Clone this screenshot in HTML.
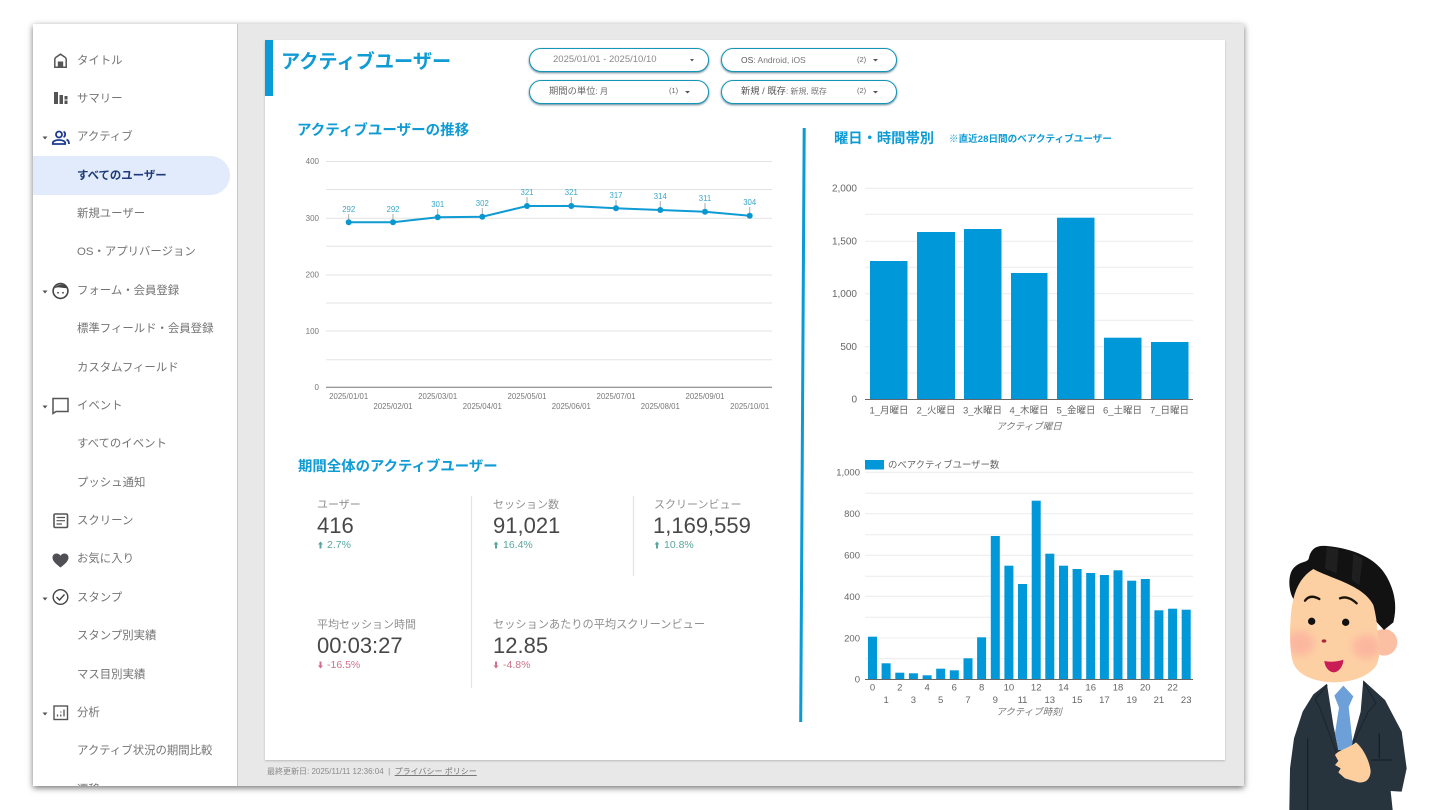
<!DOCTYPE html>
<html lang="ja">
<head>
<meta charset="utf-8">
<title>アクティブユーザー</title>
<style>
html,body{margin:0;padding:0;background:#fff;width:1440px;height:810px;overflow:hidden}
body{font-family:"Liberation Sans","Noto Sans CJK JP",sans-serif;position:relative}
#root{position:absolute;left:0;top:0;width:1440px;height:810px;filter:blur(.3px)}
.a{position:absolute}
.t{position:absolute;white-space:nowrap;line-height:16px;height:16px}
.n{font-size:11.4px;color:#747474;left:77px}
.h{color:#0f9bd3;font-weight:700}
.pill{position:absolute;box-sizing:border-box;height:24px;border:1px solid #1596b8;border-radius:12px;background:#fff;box-shadow:0 1px 2px rgba(0,60,90,.65)}
.k{font-size:11px;color:#8f8f8f}
.v{font-size:22px;color:#484848;line-height:26px;height:26px}
.d{font-size:10.5px}
.up{color:#5aa6a0}
.dn{color:#d0708a}
svg text{font-family:"Liberation Sans","Noto Sans CJK JP",sans-serif;dominant-baseline:central}
</style>
</head>
<body>
<div id="root">
<div class="a" style="left:33px;top:24px;width:1211px;height:762px;background:#e8e8e8;box-shadow:0 2px 6px rgba(0,0,0,.55)"></div>
<div class="a" style="left:0;top:0;width:1440px;height:786px;overflow:hidden">
  <div class="a" style="left:33px;top:24px;width:204px;height:762px;background:#fff;border-right:1px solid #c8c8c8"></div>
  <div class="a" style="left:33px;top:156px;width:197px;height:39px;background:#e2ebfb;border-radius:0 20px 20px 0"></div>

  <div class="t n" style="top:53px">タイトル</div>
  <div class="t n" style="top:91px">サマリー</div>
  <div class="t n" style="top:129px">アクティブ</div>
  <div class="t n" style="top:168px;color:#1f3a7a;font-weight:700">すべてのユーザー</div>
  <div class="t n" style="top:206px">新規ユーザー</div>
  <div class="t n" style="top:244px">OS・アプリバージョン</div>
  <div class="t n" style="top:283px">フォーム・会員登録</div>
  <div class="t n" style="top:321px">標準フィールド・会員登録</div>
  <div class="t n" style="top:360px">カスタムフィールド</div>
  <div class="t n" style="top:398px">イベント</div>
  <div class="t n" style="top:436px">すべてのイベント</div>
  <div class="t n" style="top:475px">プッシュ通知</div>
  <div class="t n" style="top:513px">スクリーン</div>
  <div class="t n" style="top:551px">お気に入り</div>
  <div class="t n" style="top:590px">スタンプ</div>
  <div class="t n" style="top:628px">スタンプ別実績</div>
  <div class="t n" style="top:667px">マス目別実績</div>
  <div class="t n" style="top:705px">分析</div>
  <div class="t n" style="top:743px">アクティブ状況の期間比較</div>
  <div class="t n" style="top:782px">遷移</div>
</div>

<svg class="a" style="left:0;top:0" width="240" height="786" viewBox="0 0 240 786">
  <g fill="#555">
    <path d="M42.500 136.500h5l-2.500 3z"/><path d="M42.500 290.500h5l-2.500 3z"/><path d="M42.500 405.500h5l-2.500 3z"/><path d="M42.500 597.500h5l-2.500 3z"/><path d="M42.500 712.500h5l-2.500 3z"/>
  </g>
  <!-- home -->
  <path d="M54.800 67.200V59.500c0-1 .4-1.700 1.200-2.300l4.500-3 4.500 3c.8.600 1.200 1.300 1.200 2.300v7.700z" fill="none" stroke="#555" stroke-width="1.500"/>
  <rect x="57.800" y="61.500" width="5.400" height="6" fill="#555"/>
  <!-- summary -->
  <g fill="#555"><rect x="54" y="92" width="4" height="12"/><rect x="59.500" y="95" width="3.500" height="9"/><rect x="64.500" y="96" width="3" height="3.500"/><rect x="64.500" y="100.500" width="3" height="3.500"/></g>
  <!-- people -->
  <g fill="none" stroke="#1d3c8f" stroke-width="1.800">
    <circle cx="59" cy="134.500" r="3"/>
    <path d="M52.800 144v-1c0-1.800 2.800-3 6.200-3s6.200 1.200 6.200 3v1z"/>
    <path d="M63.500 131.800c2 .4 2.400 4.400 0 5.200"/>
    <path d="M66.500 139.500c1.500.6 2.500 2 2.500 4.500"/>
  </g>
  <!-- face -->
  <circle cx="60.500" cy="291" r="7.400" fill="none" stroke="#444" stroke-width="1.600"/>
  <path d="M54.500 288.500c2-4.500 10-5.500 12.500-.5-4 .6-9-2-12.500.5z" fill="#444"/>
  <circle cx="58" cy="292.800" r=".9" fill="#444"/><circle cx="63" cy="292.800" r=".9" fill="#444"/>
  <!-- chat -->
  <path d="M53 398.500h15v13H56l-3 2z" fill="none" stroke="#555" stroke-width="1.500"/>
  <!-- screen -->
  <rect x="54" y="514" width="13.500" height="13.500" rx="1.200" fill="none" stroke="#555" stroke-width="1.600"/>
  <path d="M56.500 517.500h8.500M56.500 520.700h8.500M56.500 524h5.500" stroke="#555" stroke-width="1.200"/>
  <!-- heart -->
  <path d="M60.500 567.500c-5-4-8-6.500-8-10 0-2.500 2-4 4-4 1.700 0 3.100.8 4 2.300.9-1.500 2.300-2.300 4-2.300 2 0 4 1.500 4 4 0 3.500-3 6-8 10z" fill="#4f4f55"/>
  <!-- check -->
  <circle cx="60.500" cy="597" r="7.300" fill="none" stroke="#444" stroke-width="1.400"/>
  <path d="M56.500 597l3 3 5-5.500" fill="none" stroke="#444" stroke-width="1.400"/>
  <!-- analytics -->
  <rect x="54" y="706" width="13.500" height="13.500" fill="none" stroke="#555" stroke-width="1.400"/>
  <path d="M57.500 716.500v-2M60.800 716.500v-2M60.800 712.500v-1M64 716.500v-7" stroke="#555" stroke-width="1.300"/>
</svg>

<!-- card -->
<div class="a" style="left:265px;top:40px;width:960px;height:720px;background:#fff;box-shadow:0 1px 2px rgba(0,0,0,.2)"></div>
<div class="a" style="left:265px;top:40px;width:8px;height:56px;background:#0a9ad6"></div>
<div class="t h" style="left:281px;top:51px;font-size:19.200px;line-height:24px;height:24px">アクティブユーザー</div>

<!-- filters -->
<div class="pill" style="left:529px;top:48px;width:180px"></div>
<div class="pill" style="left:721px;top:48px;width:176px"></div>
<div class="pill" style="left:529px;top:80px;width:180px"></div>
<div class="pill" style="left:721px;top:80px;width:176px"></div>
<div class="t" style="left:553px;top:52px;font-size:9.500px;color:#8a8a8a">2025/01/01 - 2025/10/10</div>
<div class="t" style="left:741px;top:52px;font-size:8.500px;color:#777"><span style="color:#555">OS</span>: Android, iOS</div>
<div class="t" style="left:857px;top:52px;font-size:7.500px;color:#666">(2)</div>
<div class="t" style="left:549px;top:83px;font-size:9.300px;color:#666">期間の単位<span style="font-size:8px">: 月</span></div>
<div class="t" style="left:669px;top:83px;font-size:7.500px;color:#666">(1)</div>
<div class="t" style="left:741px;top:83px;font-size:9.300px;color:#555">新規 / 既存<span style="font-size:8px;color:#777">: 新規, 既存</span></div>
<div class="t" style="left:857px;top:83px;font-size:7.500px;color:#666">(2)</div>

<div class="t h" style="left:297px;top:123px;font-size:14.500px">アクティブユーザーの推移</div>
<div class="t h" style="left:298px;top:459px;font-size:14.400px">期間全体のアクティブユーザー</div>
<div class="t h" style="left:834px;top:131px;font-size:14.300px">曜日・時間帯別</div>
<div class="t h" style="left:949px;top:132px;font-size:9.600px">※直近28日間のべアクティブユーザー</div>

<!-- KPIs -->
<div class="t k" style="left:317px;top:497px">ユーザー</div>
<div class="t v" style="left:317px;top:513px">416</div>
<div class="t d up" style="left:327px;top:537px">2.7%</div>
<div class="t k" style="left:493px;top:497px">セッション数</div>
<div class="t v" style="left:493px;top:513px">91,021</div>
<div class="t d up" style="left:503px;top:537px">16.4%</div>
<div class="t k" style="left:654px;top:497px">スクリーンビュー</div>
<div class="t v" style="left:653px;top:513px">1,169,559</div>
<div class="t d up" style="left:664px;top:537px">10.8%</div>
<div class="t k" style="left:317px;top:617px">平均セッション時間</div>
<div class="t v" style="left:317px;top:633px">00:03:27</div>
<div class="t d dn" style="left:327px;top:657px">-16.5%</div>
<div class="t k" style="left:493px;top:617px;font-size:11.200px">セッションあたりの平均スクリーンビュー</div>
<div class="t v" style="left:493px;top:633px">12.85</div>
<div class="t d dn" style="left:503px;top:657px">-4.8%</div>

<div class="t" style="left:267px;top:764px;font-size:8px;color:#8a8a8a">最終更新日: 2025/11/11 12:36:04 &nbsp;|&nbsp; <span style="text-decoration:underline;color:#777">プライバシー ポリシー</span></div>

<!-- charts -->
<svg class="a" style="left:0;top:0" width="1440" height="810" viewBox="0 0 1440 810">
  <g fill="#555">
    <path d="M690 59h4l-2 2.500z"/><path d="M873 59h5l-2.500 2.500z"/><path d="M685 91h5l-2.500 2.500z"/><path d="M873 91h5l-2.500 2.500z"/>
  </g>
  <path d="M804.200 128l-3.500 594" stroke="#0a9ad6" stroke-width="3" fill="none"/>
  <path d="M471.500 496v192M633.500 496v80" stroke="#e4e4e4" stroke-width="1.200"/>
  <g fill="#5aa6a0"><path d="M320.500 541.500l2.500 3h-1.500v4h-2v-4H318z"/><path d="M496 541.500l2.500 3H497v4h-2v-4h-1.500z"/><path d="M657 541.500l2.500 3H658v4h-2v-4h-1.500z"/></g>
  <g fill="#d0708a"><path d="M320.500 668.500l2.500-3h-1.500v-4h-2v4H318z"/><path d="M496 668.500l2.500-3H497v-4h-2v4h-1.500z"/></g>

  <!-- line chart -->
  <g stroke="#e3e3e3" stroke-width="1">
    <path d="M326 161.500h446M326 189.500h446M326 218.300h446M326 246.300h446M326 275h446M326 303h446M326 331h446M326 359.700h446"/>
  </g>
  <path d="M326 387.300h446" stroke="#777" stroke-width="1"/>
  <g font-size="8" fill="#777" text-anchor="end" transform="translate(0,.7)">
    <text x="319" y="161">400</text><text x="319" y="218">300</text><text x="319" y="274.500">200</text><text x="319" y="331">100</text><text x="319" y="387">0</text>
  </g>
  <g stroke="#aaa" stroke-width="1">
    <path d="M348.700 214v6M393 214v6M437.700 209v6M482.300 208v6M527 197v7M571.300 197v7M616 200v6M660.300 201v7M705 203v7M749.700 207v7"/>
  </g>
  <polyline points="348.700,222.300 393,222.300 437.700,217.300 482.300,216.700 527,206 571.300,206 616,208.300 660.300,210 705,211.700 749.700,215.700" fill="none" stroke="#0f9bd3" stroke-width="2"/>
  <g fill="#0a97cf">
    <circle cx="348.700" cy="222.300" r="3"/><circle cx="393" cy="222.300" r="3"/><circle cx="437.700" cy="217.300" r="3"/><circle cx="482.300" cy="216.700" r="3"/><circle cx="527" cy="206" r="3"/><circle cx="571.300" cy="206" r="3"/><circle cx="616" cy="208.300" r="3"/><circle cx="660.300" cy="210" r="3"/><circle cx="705" cy="211.700" r="3"/><circle cx="749.700" cy="215.700" r="3"/>
  </g>
  <g font-size="7.800" fill="#3aa7c9" text-anchor="middle">
    <text x="348.700" y="209.500">292</text><text x="393" y="209.500">292</text><text x="437.700" y="204.500">301</text><text x="482.300" y="203.500">302</text><text x="527" y="192.500">321</text><text x="571.300" y="192.500">321</text><text x="616" y="195.500">317</text><text x="660.300" y="196.500">314</text><text x="705" y="198.500">311</text><text x="749.700" y="202.500">304</text>
  </g>
  <g font-size="7.800" fill="#777" text-anchor="middle">
    <text x="348.700" y="396.500">2025/01/01</text><text x="393" y="406.500">2025/02/01</text><text x="437.700" y="396.500">2025/03/01</text><text x="482.300" y="406.500">2025/04/01</text><text x="527" y="396.500">2025/05/01</text><text x="571.300" y="406.500">2025/06/01</text><text x="616" y="396.500">2025/07/01</text><text x="660.300" y="406.500">2025/08/01</text><text x="705" y="396.500">2025/09/01</text><text x="749.700" y="406.500">2025/10/01</text>
  </g>

  <!-- weekday chart -->
  <path d="M865 188.300h328M865 214.300h328M865 241.300h328M865 267.300h328M865 293.700h328M865 320.300h328M865 346.700h328M865 373h328" stroke="#ececec" stroke-width="1"/>
  <g fill="#0098d8">
    <rect x="870" y="261" width="37.500" height="138.500"/>
    <rect x="917" y="232" width="38" height="167.500"/>
    <rect x="964" y="229" width="37.500" height="170.500"/>
    <rect x="1011" y="273" width="36.500" height="126.500"/>
    <rect x="1057" y="217.700" width="37.500" height="181.800"/>
    <rect x="1104" y="337.700" width="37.500" height="61.800"/>
    <rect x="1151" y="342" width="37.500" height="57.500"/>
  </g>
  <path d="M865 399.500h328" stroke="#666" stroke-width="1"/>
  <g font-size="10" fill="#666" text-anchor="end" transform="translate(0,.7)">
    <text x="857" y="188.500">2,000</text><text x="857" y="241.500">1,500</text><text x="857" y="294">1,000</text><text x="857" y="347">500</text><text x="857" y="399.500">0</text>
  </g>
  <g font-size="9.500" fill="#666" text-anchor="middle">
    <text x="889" y="410.800">1_月曜日</text><text x="936" y="410.800">2_火曜日</text><text x="982.500" y="410.800">3_水曜日</text><text x="1029" y="410.800">4_木曜日</text><text x="1076" y="410.800">5_金曜日</text><text x="1122.500" y="410.800">6_土曜日</text><text x="1169.500" y="410.800">7_日曜日</text>
  </g>
  <text x="1029" y="427" font-size="9.500" font-style="italic" fill="#777" text-anchor="middle">アクティブ曜日</text>

  <!-- hourly chart -->
  <rect x="865" y="460" width="19" height="9.500" fill="#0098d8"/>
  <text x="888" y="464.500" font-size="9.400" fill="#666">のべアクティブユーザー数</text>
  <path d="M865 472.300h328M865 493.300h328M865 513.700h328M865 534.700h328M865 555.300h328M865 576.300h328M865 596.300h328M865 617.300h328M865 638h328M865 658.700h328" stroke="#ececec" stroke-width="1"/>
  <g fill="#0098d8">
    <rect x="868" y="636.700" width="9" height="42.800"/>
    <rect x="881.600" y="663.300" width="9" height="16.200"/>
    <rect x="895.300" y="672.700" width="9" height="6.800"/>
    <rect x="908.900" y="673.300" width="9" height="6.200"/>
    <rect x="922.600" y="675.300" width="9" height="4.200"/>
    <rect x="936.200" y="668.700" width="9" height="10.800"/>
    <rect x="949.800" y="670.300" width="9" height="9.200"/>
    <rect x="963.500" y="658.300" width="9" height="21.200"/>
    <rect x="977.100" y="637.300" width="9" height="42.200"/>
    <rect x="990.800" y="536" width="9" height="143.500"/>
    <rect x="1004.400" y="565.700" width="9" height="113.800"/>
    <rect x="1018" y="584" width="9" height="95.500"/>
    <rect x="1031.700" y="500.700" width="9" height="178.800"/>
    <rect x="1045.300" y="553.700" width="9" height="125.800"/>
    <rect x="1059" y="565.700" width="9" height="113.800"/>
    <rect x="1072.600" y="569" width="9" height="110.500"/>
    <rect x="1086.200" y="573" width="9" height="106.500"/>
    <rect x="1099.900" y="575" width="9" height="104.500"/>
    <rect x="1113.500" y="570.300" width="9" height="109.200"/>
    <rect x="1127.200" y="580.700" width="9" height="98.800"/>
    <rect x="1140.800" y="579" width="9" height="100.500"/>
    <rect x="1154.400" y="610.300" width="9" height="69.200"/>
    <rect x="1168.100" y="608.700" width="9" height="70.800"/>
    <rect x="1181.700" y="609.700" width="9" height="69.800"/>
  </g>
  <path d="M865 679.500h328" stroke="#666" stroke-width="1"/>
  <g font-size="9.500" fill="#666" text-anchor="end" transform="translate(0,.5)">
    <text x="860" y="472.500">1,000</text><text x="860" y="514">800</text><text x="860" y="555.500">600</text><text x="860" y="597">400</text><text x="860" y="638.500">200</text><text x="860" y="679.500">0</text>
  </g>
  <g font-size="9.500" fill="#666" text-anchor="middle" transform="translate(0,.5)">
    <text x="872.500" y="687.500">0</text><text x="899.800" y="687.500">2</text><text x="927.100" y="687.500">4</text><text x="954.300" y="687.500">6</text><text x="981.600" y="687.500">8</text><text x="1008.900" y="687.500">10</text><text x="1036.200" y="687.500">12</text><text x="1063.500" y="687.500">14</text><text x="1090.700" y="687.500">16</text><text x="1118" y="687.500">18</text><text x="1145.300" y="687.500">20</text><text x="1172.600" y="687.500">22</text>
    <text x="886.100" y="700">1</text><text x="913.400" y="700">3</text><text x="940.700" y="700">5</text><text x="968" y="700">7</text><text x="995.300" y="700">9</text><text x="1022.500" y="700">11</text><text x="1049.800" y="700">13</text><text x="1077.100" y="700">15</text><text x="1104.400" y="700">17</text><text x="1131.700" y="700">19</text><text x="1158.900" y="700">21</text><text x="1186.200" y="700">23</text>
  </g>
  <text x="1029" y="712.500" font-size="9.500" font-style="italic" fill="#777" text-anchor="middle">アクティブ時刻</text>
</svg>

<!-- character -->
<svg class="a" style="left:1270px;top:535px" width="150" height="275" viewBox="0 0 450 825">
  <defs>
    <filter id="b" x="-60%" y="-60%" width="220%" height="220%"><feGaussianBlur stdDeviation="12"/></filter>
    <clipPath id="fc"><path d="M70 192C80 150 100 120 130 102C180 130 280 150 310 210C318 240 322 270 322 290C330 330 332 360 320 390C300 420 255 442 190 442C130 440 85 420 70 385C56 350 58 240 70 192z"/></clipPath>
  </defs>
  <path d="M172 445L130 478L98 530L72 610L60 700L58 825H368L362 768L395 770L410 700L395 590L345 495L280 436z" fill="#27333d"/>
  <path d="M170 442L280 434L272 530L240 645L205 645L190 570z" fill="#fff"/>
  <path d="M220 452L250 484L236 516L248 625L238 645L205 645L195 595L207 518L193 482z" fill="#6d9fd8"/>
  <path d="M172 450L135 492L150 520L200 655M280 440L318 505L295 530L242 640" fill="none" stroke="#1a252e" stroke-width="3"/>
  <path d="M113 610V825M328 595V670M305 675H365" fill="none" stroke="#16202a" stroke-width="4"/>
  <circle cx="342" cy="322" r="40" fill="#fbc0a4"/>
  <path d="M72 195C55 170 52 118 72 98C92 78 108 84 116 72C122 40 140 30 170 33C250 40 320 70 350 125C375 170 382 215 370 262L342 285L300 240L170 150L100 150z" fill="#121212"/>
  <path d="M170 36L205 42L200 115L165 100zM250 55L278 70L268 150L245 135z" fill="#2a2a2a" opacity=".55"/>
  <path d="M70 192C80 150 100 120 130 102C180 130 280 150 310 210C318 240 322 270 322 290C330 330 332 360 320 390C300 420 255 442 190 442C130 440 85 420 70 385C56 350 58 240 70 192z" fill="#fdd0a4"/>
  <g clip-path="url(#fc)"><g filter="url(#b)" fill="#fba69c" opacity=".6"><ellipse cx="90" cy="325" rx="42" ry="36"/><ellipse cx="290" cy="335" rx="42" ry="36"/></g></g>
  <path d="M105 197C115 183 130 182 148 192M210 190C225 183 245 190 260 205" fill="none" stroke="#1a1208" stroke-width="7" stroke-linecap="round"/>
  <circle cx="125" cy="259" r="11" fill="#111"/>
  <circle cx="227" cy="262" r="11" fill="#111"/>
  <ellipse cx="162" cy="318" rx="7" ry="5" fill="#a52a3a"/>
  <path d="M163 378C180 382 205 380 220 374C220 395 205 412 192 412C178 412 165 398 163 378z" fill="#c81e55"/>
  <path d="M195 660C205 645 235 640 258 622C280 640 300 680 302 710C300 735 285 745 265 742L225 730L205 712L212 700L195 690L205 678z" fill="#fdcf9f"/>
</svg>
</div>
</body>
</html>
